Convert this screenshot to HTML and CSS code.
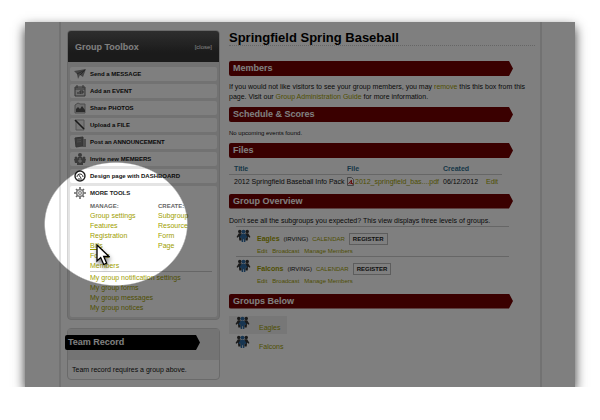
FILE: index.html
```html
<!DOCTYPE html>
<html lang="en">
<head>
<meta charset="utf-8">
<title>Springfield Spring Baseball</title>
<link rel="stylesheet" href="styles.css">
</head>
<body>
<svg class="defs" aria-hidden="true">
  <symbol id="people" viewBox="0 0 16 14">
    <g fill="#333"><circle cx="4" cy="2.600" r="1.900"/><circle cx="12" cy="2.600" r="1.900"/><path d="M3 4.500h3v8H3.500L3 8 1.500 9.500.5 8.500z"/><path d="M13 4.500h-3v8h2.500L13 8l1.500 1.500 1-1z"/></g>
    <g fill="#2e6ba3"><circle cx="8" cy="3" r="2.200"/><path d="M6 5.500h4l2.500 3.500-1.200 1L10 8.500V14H8.400v-3h-.8v3H6V8.500L4.700 10l-1.200-1z"/></g>
  </symbol>
</svg>
<div class="window">
  <div class="page">
    <aside class="side">
      <section class="toolbox">
        <header class="toolbox-head"><h2>Group Toolbox</h2><button type="button">[close]</button></header>
        <ul class="tools">
          <li><svg viewBox="0 0 12 12"><path fill="#888" d="M0 3l12-2-3 8-3-2-2 4-1-5z"/><path d="M3 6l8-4-5 5" fill="none" stroke="#555"/></svg><a href="#">Send a MESSAGE</a></li>
          <li><svg viewBox="0 0 12 12"><path fill="#ddd" stroke="#666" d="M1 2h10v9H1zM1 4h10M3 0v3M9 0v3"/><path stroke="#555" d="M3 8h2M6 9V6h3v2H6"/></svg><a href="#">Add an EVENT</a></li>
          <li><svg viewBox="0 0 12 12"><path fill="#ddd" stroke="#999" d="M1 3l3-2 2 1h5v9H1z"/><path fill="#555" d="M2 10V7l2-2 2 2 2-3 3 4v2z"/></svg><a href="#">Share PHOTOS</a></li>
          <li><svg viewBox="0 0 12 12"><path fill="#eee" stroke="#aaa" d="M2 1h8v10H2z"/><path stroke="#333" stroke-width="1.600" d="M1 1l9 9"/></svg><a href="#">Upload a FILE</a></li>
          <li><svg viewBox="0 0 12 12"><path fill="#777" stroke="#666" d="M1 2l8-1v9l-7 1z"/><path fill="#999" d="M9 3h3v8H4l5-1z"/><path stroke="#999" d="M3 4l4-.5M3 6l4-.5"/></svg><a href="#">Post an ANNOUNCEMENT</a></li>
          <li><svg viewBox="0 0 12 12"><g fill="#777"><circle cx="6" cy="2" r="2"/><circle cx="2" cy="5" r="1.500"/><circle cx="10" cy="5" r="1.500"/><path d="M4 4h4l1 2h3l-1 4H9v2H3v-2H1L0 6h3z"/></g><path stroke="#ddd" d="M6 5v5M4 8h4"/></svg><a href="#">Invite new MEMBERS</a></li>
          <li><svg viewBox="0 0 12 12"><circle cx="6" cy="6" r="5" fill="#fff" stroke="#222" stroke-width="1.400"/><path fill="none" stroke="#333" d="M3 7c0-4 6-4 6 0M4 4l3 4M4 9h4"/></svg><a href="#">Design page with DASHBOARD</a></li>
          <li class="more">
            <div class="more-head"><svg viewBox="0 0 12 12"><path stroke="#666" stroke-width="1.600" d="M6 0v12M0 6h12M2 2l8 8M10 2l-8 8"/><circle cx="6" cy="6" r="3.400" fill="#ddd" stroke="#777" stroke-width="1.400"/><circle cx="6" cy="6" r="1.400" fill="#fff" stroke="#777"/></svg><h3>MORE TOOLS</h3></div>
            <div class="more-body">
              <div class="columns">
                <div><h4>MANAGE:</h4><a href="#">Group settings</a><a href="#">Features</a><a href="#">Registration</a><a href="#" class="hovered">Bills</a><a href="#">Forms</a><a href="#">Members</a></div>
                <div><h4>CREATE:</h4><a href="#">Subgroup</a><a href="#">Resource</a><a href="#">Form</a><a href="#">Page</a></div>
              </div>
              <div class="mine"><a href="#">My group notification settings</a><a href="#">My group forms</a><a href="#">My group messages</a><a href="#">My group notices</a></div>
            </div>
          </li>
        </ul>
      </section>
      <section class="record">
        <header><h2>Team Record</h2></header>
        <p>Team record requires a group above.</p>
      </section>
    </aside>
    <main>
      <h1>Springfield Spring Baseball</h1>
      <section class="members">
        <h2 class="bar">Members</h2>
        <p>If you would not like visitors to see your group members, you may <a href="#">remove</a> this this box from this<br>page. Visit our <a href="#">Group Administration Guide</a> for more information.</p>
      </section>
      <section class="schedule">
        <h2 class="bar">Schedule &amp; Scores</h2>
        <p>No upcoming events found.</p>
      </section>
      <section class="files">
        <h2 class="bar">Files</h2>
        <table>
          <thead><tr><th class="c-title">Title</th><th class="c-file">File</th><th class="c-date">Created</th><th></th></tr></thead>
          <tbody><tr><td>2012 Springfield Baseball Info Pack</td><td><span class="file"><svg viewBox="0 0 7 9"><path fill="#fff" stroke="#888" d="M.5.500h4l2 2v6h-6z"/><path fill="none" stroke="#c22" d="M1.500 7l3-4v3l1.500 1-3-1"/></svg><a href="#">2012_springfield_bas....pdf</a></span></td><td>06/12/2012</td><td><a href="#">Edit</a></td></tr></tbody>
        </table>
      </section>
      <section class="overview">
        <h2 class="bar">Group Overview</h2>
        <p>Don't see all the subgroups you expected? This view displays three levels of groups.</p>
        <article class="group">
          <svg class="people"><use href="#people"/></svg>
          <div>
            <div class="line"><a href="#" class="name">Eagles</a><span>(IRVING)</span><a href="#">CALENDAR</a><button type="button">REGISTER</button></div>
            <div class="actions"><a href="#">Edit</a><a href="#">Broadcast</a><a href="#">Manage Members</a></div>
          </div>
        </article>
        <article class="group">
          <svg class="people"><use href="#people"/></svg>
          <div>
            <div class="line"><a href="#" class="name">Falcons</a><span>(IRVING)</span><a href="#">CALENDAR</a><button type="button">REGISTER</button></div>
            <div class="actions"><a href="#">Edit</a><a href="#">Broadcast</a><a href="#">Manage Members</a></div>
          </div>
        </article>
      </section>
      <section class="below">
        <h2 class="bar">Groups Below</h2>
        <ul>
          <li class="shaded"><svg class="people"><use href="#people"/></svg><a href="#">Eagles</a></li>
          <li><svg class="people"><use href="#people"/></svg><a href="#">Falcons</a></li>
        </ul>
      </section>
    </main>
  </div>
  <div class="spotlight"></div>
  <svg class="cursor" viewBox="0 0 14 22"><path fill="#fff" stroke="#000" stroke-width="1.300" d="M1 1v16l3.700-3.500 3 7 3-1.300-3-6.700H13z"/></svg>
</div>
</body>
</html>
```
FILE: styles.css
```css
* { box-sizing: border-box; }
body { margin: 0; padding: 22px 25px 0; background: #fff; color: #111; font: 7px/10px "Liberation Sans", Arial, sans-serif; }
h1, h2, h3, h4, p, ul { margin: 0; padding: 0; }
ul { list-style: none; }
a { color: #a09e00; text-decoration: none; }
button { font-family: inherit; }
svg { display: block; flex: none; }
.defs { position: absolute; width: 0; height: 0; }

.window { position: relative; background: #fff; box-shadow: 0 5px 11px rgba(0, 0, 0, .8); }
.page { display: flex; gap: 9px; margin: 0 33px 0 34px; padding: 8px 5px 7px 6px; border: solid #e4e4e4; border-width: 0 2px; }

.side { flex: 0 0 153px; display: flex; flex-direction: column; gap: 8px; }
.toolbox { border: 1px solid #d4d4d4; border-radius: 4px; background: #e4e4e4; overflow: hidden; }
.toolbox-head { display: flex; align-items: center; justify-content: space-between; height: 31px; padding: 0 7px; background: linear-gradient(#5c5c5c, #363636 70%); }
.toolbox-head h2 { color: #fff; font-size: 9px; }
.toolbox-head button { padding: 0; border: 0; background: none; color: #fff; font-size: 6px; }
.tools { display: flex; flex-direction: column; gap: 3px; padding: 5px 2px 2px; }
.tools > li { display: flex; align-items: center; gap: 4px; height: 14px; padding-left: 4px; border-radius: 2px; background: #fff; }
.tools svg { width: 12px; height: 12px; fill: none; }
.tools > li > a { color: #111; font-size: 6px; font-weight: bold; }
.tools > .more { display: block; height: auto; padding-bottom: 4px; }
.more-head { display: flex; align-items: center; gap: 4px; height: 14px; }
.more h3 { color: #222; font-size: 6px; }
.more-body { padding: 1px 5px 0 16px; }
.more-body a { display: block; width: fit-content; }
.more h4 { color: #666; font-size: 6px; }
.columns { display: grid; grid-template-columns: 68px 1fr; border-bottom: 1px solid #ccc; }
.columns .hovered { text-decoration: underline; }
.mine { padding-top: 1px; }

.record { border: 1px solid #d4d4d4; border-radius: 4px; background: #fff; }
.record header { padding: 6px 19px 10px 0; background: #e8e8e8; }
.record h2 { margin-left: -3px; padding-left: 3px; border-radius: 2px; background: #000; color: #fff; font-size: 9px; line-height: 15px; clip-path: polygon(0 0, calc(100% - 4px) 0, 100% 50%, calc(100% - 4px) 100%, 0 100%); }
.record p { padding: 5px 4px 4px; }

main { flex: 1; min-width: 0; }
h1 { margin-bottom: 15px; border-bottom: 1px dotted #ccc; color: #000; font-size: 13px; line-height: 15px; }
.bar { margin-right: 22px; padding-left: 4px; border-radius: 2px; background: #740000; color: #fff; font-size: 9px; line-height: 15px; clip-path: polygon(0 0, calc(100% - 4px) 0, 100% 50%, calc(100% - 4px) 100%, 0 100%); }
.members p { padding: 6px 0 5px; }
.schedule p { padding: 6px 0 5px; font-size: 6px; }

table { width: calc(100% - 33px); margin: 6px 0 5px; border-collapse: collapse; table-layout: fixed; }
th { height: 10px; padding: 0; border-bottom: 1px solid #ccc; color: #2f6f8f; text-align: left; }
td { height: 14px; padding: 0; white-space: nowrap; }
th:first-child, td:first-child { padding-left: 5px; }
.c-title { width: 118px; }
.c-file { width: 96px; }
.c-date { width: 43px; }
.file { display: flex; align-items: center; gap: 1px; }
.file svg { width: 7px; height: 9px; }

.overview { margin-bottom: 8px; }
.overview p { padding: 7px 0 0; }
.people { width: 15px; height: 13px; }
.group { display: flex; gap: 6px; height: 30px; margin: 0 26px 0 7px; padding-top: 2px; border-top: 1px solid #ccc; }
.line { display: flex; align-items: center; gap: 4px; height: 15px; padding-top: 5px; font-size: 6px; }
.line .name { font-size: 7px; font-weight: bold; }
.line button { height: 12px; padding: 0 3px; border: 1px solid #bbb; background: #fff; color: #222; font-size: 6px; font-weight: bold; line-height: 10px; }
.actions { display: flex; gap: 5px; padding-top: 2px; font-size: 6px; }

.below ul { padding-top: 7px; }
.below li { display: flex; align-items: flex-start; gap: 9px; width: 58px; height: 18px; padding-left: 6px; }
.below li a { padding-top: 7px; }
.shaded { margin-bottom: 1px; background: #eee; }

.spotlight { position: absolute; inset: 0; background: radial-gradient(ellipse 72px 62px at 91px 202px, transparent 98%, rgba(0, 0, 0, .5) 100%); pointer-events: none; }
.cursor { position: absolute; left: 71px; top: 222px; width: 14px; height: 22px; filter: drop-shadow(1px 3px 2px rgba(0, 0, 0, .5)); }
```
